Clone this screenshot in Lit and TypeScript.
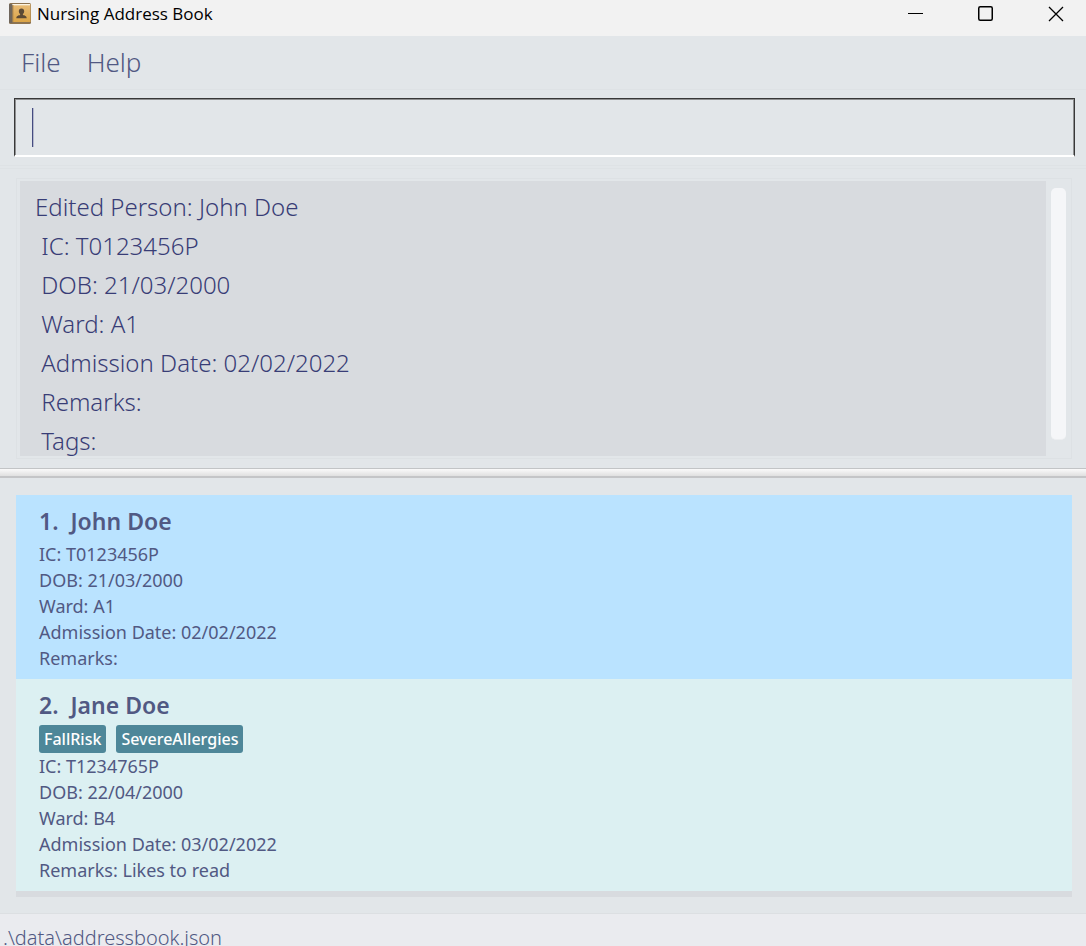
import { LitElement, html, css, svg } from "lit";
import { customElement, property, state } from "lit/decorators.js";

interface Person {
  name: string;
  ic: string;
  dob: string;
  ward: string;
  admission: string;
  remarks: string;
  tags: string[];
}

const PERSONS: Person[] = [
  { name: "John Doe", ic: "T0123456P", dob: "21/03/2000", ward: "A1", admission: "02/02/2022", remarks: "", tags: [] },
  {
    name: "Jane Doe",
    ic: "T1234765P",
    dob: "22/04/2000",
    ward: "B4",
    admission: "03/02/2022",
    remarks: "Likes to read",
    tags: ["FallRisk", "SevereAllergies"],
  },
];

const RESULT = [
  "Edited Person: John Doe",
  " IC: T0123456P",
  " DOB: 21/03/2000",
  " Ward: A1",
  " Admission Date: 02/02/2022",
  " Remarks:",
  " Tags:",
].join("\n");

const bookIcon = svg`
  <defs>
    <linearGradient id="cover" x1="0" y1="0" x2="0" y2="1">
      <stop offset="0" stop-color="#e8bc78" />
      <stop offset="1" stop-color="#dba446" />
    </linearGradient>
  </defs>
  <rect x="0" y="0" width="22" height="21" rx="1.5" fill="#8d7350" />
  <rect x="4" y="1" width="17.500" height="18" fill="url(#cover)" />
  <rect x="2" y="1" width="19" height="1.300" fill="#fbf3e2" />
  <rect x="0" y="1" width="3.500" height="19" rx="1" fill="#6f665c" />
  <rect x="3.500" y="2" width="1" height="17" fill="#b98d4c" />
  <path d="M12.500 5.500c1.800 0 2.700 1.200 2.700 2.800 0 1.200-.6 2.200-1.300 2.800v.9c1.600.5 3.800.8 3.800 3.200H7.300c0-2.400 2.200-2.700 3.800-3.200v-.9c-.7-.6-1.300-1.600-1.300-2.800 0-1.600.9-2.800 2.700-2.800z" fill="#5c4a35" />
`;

@customElement("person-card")
class PersonCard extends LitElement {
  @property({ attribute: false }) person!: Person;
  @property({ type: Number }) index = 1;

  static styles = css`
    :host {
      display: block;
      padding: 8px 23px;
      color: #515983;
    }
    .name {
      margin: 0;
      display: flex;
      gap: 12px;
      font-size: 23px;
      line-height: 36px;
      padding-bottom: 2px;
      font-weight: 600;
    }
    .tags {
      display: flex;
      gap: 10px;
    }
    .tag {
      padding: 0 5px;
      border-radius: 3px;
      background: #4e8799;
      color: #fff;
      font-size: 16px;
      line-height: 28px;
      font-weight: 500;
    }
    .line {
      margin: 0;
      font-size: 18px;
      line-height: 26px;
    }
  `;

  render() {
    const p = this.person;
    return html`
      <h2 class="name"><span>${this.index}.</span><span>${p.name}</span></h2>
      ${p.tags.length ? html`<div class="tags">${p.tags.map((t) => html`<span class="tag">${t}</span>`)}</div>` : ""}
      <p class="line">IC: ${p.ic}</p>
      <p class="line">DOB: ${p.dob}</p>
      <p class="line">Ward: ${p.ward}</p>
      <p class="line">Admission Date: ${p.admission}</p>
      <p class="line">Remarks: ${p.remarks}</p>
    `;
  }
}

@customElement("app-root")
class AppRoot extends LitElement {
  @state() private selected = 0;

  static styles = css`
    :host {
      display: flex;
      flex-direction: column;
      height: 100vh;
      overflow: hidden;
      background: #e2e6e9;
      color: #515983;
      font-family: "Noto Sans", "Open Sans", sans-serif;
    }
    * {
      box-sizing: border-box;
    }
    button {
      border: 0;
      padding: 0;
      background: none;
      color: inherit;
      font: inherit;
    }
    .titlebar {
      flex: none;
      display: flex;
      align-items: flex-start;
      height: 36px;
      padding-left: 9px;
      background: #f2f2f2;
      color: #000;
    }
    .book {
      flex: none;
      margin: 3px 6px 0 0;
    }
    .title {
      flex: 1;
      margin: 0;
      font-family: "Open Sans", sans-serif;
      font-size: 17px;
      line-height: 28px;
      font-weight: 400;
    }
    .window-button {
      display: grid;
      place-items: center;
      width: 70px;
      height: 28px;
    }
    .window-button:last-child {
      width: 60px;
      margin-left: 5px;
    }
    .menubar {
      flex: none;
      display: flex;
      gap: 26px;
      height: 54px;
      padding: 0 21px;
      border-bottom: 1px solid #dee2e5;
      font-size: 26px;
      line-height: 52px;
      font-weight: 300;
    }
    .menubar button {
      height: 52px;
    }
    .command {
      flex: none;
      position: relative;
      padding: 8px 11px 8px 14px;
      border-bottom: 1px solid #dee2e5;
    }
    .command-input {
      display: block;
      width: 100%;
      height: 59px;
      padding: 0 17px;
      border: 1px solid #383838;
      border-bottom: 2px solid #fff;
      border-radius: 0;
      outline: 0;
      background: transparent;
      box-shadow: inset 1px 1px #8f9091, inset -1px 0 #8f9091;
      color: #383d76;
      font: 300 24px "Noto Sans", sans-serif;
    }
    .caret {
      position: absolute;
      left: 32px;
      top: 18px;
      width: 1px;
      height: 39px;
      background: #454c80;
      box-shadow: 1px 0 #b5b9cd;
    }
    .result-pane {
      flex: none;
      margin-top: 2px;
      padding: 9px 14px 9px 16px;
      border-top: 1px solid #dee2e5;
    }
    .result {
      display: flex;
      gap: 5px;
      padding: 2px 5px 2px 3px;
      border: 1px solid #dde1e4;
    }
    .result-text {
      flex: 1;
      min-width: 0;
      height: 275px;
      padding: 6px 15px 0;
      border: 0;
      outline: 0;
      resize: none;
      overflow: hidden;
      background: #d8dbdf;
      color: #383d76;
      font: 300 24px/39px "Noto Sans", sans-serif;
    }
    .scroll-thumb {
      width: 15px;
      height: 252px;
      margin-top: 7px;
      border-radius: 5px;
      background: #f5f6f8;
      border-bottom: 1px solid #eceef0;
    }
    .divider {
      flex: none;
      height: 10px;
      border-top: 1px solid #c2c4c6;
      border-bottom: 2px solid #c4c5c7;
      background: linear-gradient(#fafafa, #e0e0e0);
    }
    .list-pane {
      flex: 1;
      min-height: 0;
      padding: 17px 14px 16px 16px;
      border-bottom: 1px solid #dcdfe2;
    }
    .list {
      height: 100%;
      margin: 0;
      padding: 0;
      overflow: hidden;
      list-style: none;
      background: #d8dbdf;
    }
    .item {
      background: #dcf0f2;
    }
    .item.selected {
      background: #bae3ff;
    }
    .status {
      flex: none;
      height: 32px;
      padding: 0 3px;
      overflow: hidden;
      background: #eaebef;
      font-size: 20px;
      line-height: 48px;
      font-weight: 300;
    }
  `;

  render() {
    return html`
      <header class="titlebar">
        <svg class="book" width="22" height="21" viewBox="0 0 22 21" aria-hidden="true">${bookIcon}</svg>
        <h1 class="title">Nursing Address Book</h1>
        <button class="window-button" aria-label="Minimize">
          <svg width="16" height="16" viewBox="0 0 16 16"><path d="M0 7.500h15" stroke="#000" /></svg>
        </button>
        <button class="window-button" aria-label="Maximize">
          <svg width="16" height="16" viewBox="0 0 16 16">
            <rect x="0.750" y="0.750" width="13.500" height="13.500" rx="1.500" fill="none" stroke="#000" stroke-width="1.500" />
          </svg>
        </button>
        <button class="window-button" aria-label="Close">
          <svg width="16" height="16" viewBox="0 0 16 16">
            <path d="M1 1l14 14M15 1L1 15" stroke="#000" stroke-width="1.300" />
          </svg>
        </button>
      </header>
      <nav class="menubar">
        <button>File</button>
        <button>Help</button>
      </nav>
      <div class="command">
        <input class="command-input" type="text" aria-label="Command" />
        <span class="caret"></span>
      </div>
      <section class="result-pane">
        <div class="result">
          <textarea class="result-text" readonly aria-label="Result" .value=${RESULT}></textarea>
          <div class="scroll-thumb"></div>
        </div>
      </section>
      <div class="divider" role="separator"></div>
      <main class="list-pane">
        <ul class="list">
          ${PERSONS.map(
            (p, i) => html`
              <li class="item ${i === this.selected ? "selected" : ""}" @click=${() => (this.selected = i)}>
                <person-card .person=${p} .index=${i + 1}></person-card>
              </li>
            `,
          )}
        </ul>
      </main>
      <footer class="status">.\\data\\addressbook.json</footer>
    `;
  }
}
